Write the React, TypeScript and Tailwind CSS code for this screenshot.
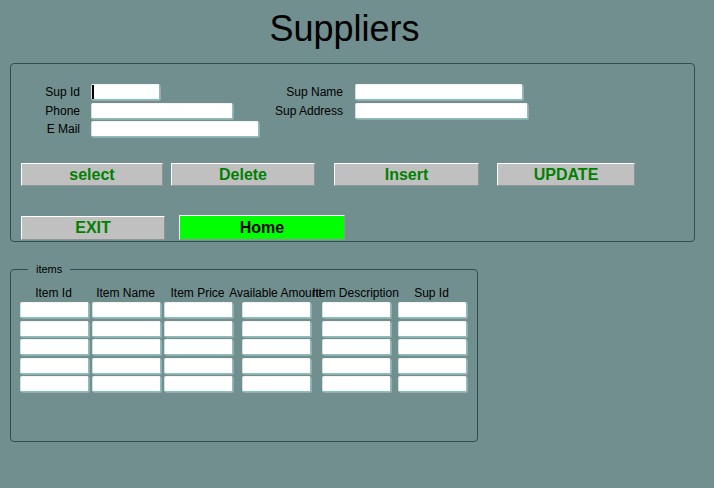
import React from "react";

function Field({ w, caret }: { w: string; caret?: boolean }) {
  return (
    <div
      className={`${w} h-[16px] bg-white border-b border-r border-[#7cc5c5] border-l border-l-[#d8dede] border-t border-t-[#f4f4f4] shadow-[1px_1px_0_#9ea8a8] rounded-[2px] flex items-center`}
    >
      {caret ? <div className="w-[2px] h-[14px] bg-black" /> : null}
    </div>
  );
}

function Btn({ w, h, label, ml, home }: { w: string; h: string; label: string; ml: string; home?: boolean }) {
  return (
    <div
      className={`${w} ${h} ${ml} flex items-center justify-center border border-t-white border-l-white border-b-[#8e9696] border-r-[#8e9696] rounded-[1px] font-bold text-[16px] leading-none ${
        home ? "bg-[#00ff00] text-black" : "bg-[#c0c0c0] text-[#008000]"
      }`}
    >
      {label}
    </div>
  );
}

const cols: { title: string; ml: string }[] = [
  { title: "Item Id", ml: "ml-0" },
  { title: "Item Name", ml: "ml-[2px]" },
  { title: "Item Price", ml: "ml-[2px]" },
  { title: "Available Amount", ml: "ml-[8px]" },
  { title: "Item Description", ml: "ml-[10px]" },
  { title: "Sup Id", ml: "ml-[6px]" },
];

export default function App() {
  return (
    <div
      className="w-[714px] h-[488px] bg-[#718f8e] text-black overflow-hidden"
      style={{ fontFamily: '"Liberation Sans", Arial, sans-serif' }}
    >
      <div className="h-[63px] pt-[11px]">
        <div className="w-[689px] text-center text-[36px] leading-[36px]">Suppliers</div>
      </div>

      <div className="ml-[10px] w-[685px] border border-[#2f4f4f] rounded-[4px] pt-[20px] pb-[1px]">
        <div className="flex text-[12px] leading-[16px]">
          <div className="w-[249px] flex flex-col gap-[2.5px]">
            <div className="flex h-[16px]">
              <div className="w-[69px] text-right">Sup Id</div>
              <div className="ml-[11px]">
                <Field w="w-[69px]" caret />
              </div>
            </div>
            <div className="flex h-[16px]">
              <div className="w-[69px] text-right">Phone</div>
              <div className="ml-[11px]">
                <Field w="w-[142px]" />
              </div>
            </div>
            <div className="flex h-[16px]">
              <div className="w-[69px] text-right">E Mail</div>
              <div className="ml-[11px]">
                <Field w="w-[168px]" />
              </div>
            </div>
          </div>
          <div className="flex flex-col gap-[2.5px]">
            <div className="flex h-[16px]">
              <div className="w-[83px] text-right">Sup Name</div>
              <div className="ml-[12px]">
                <Field w="w-[168px]" />
              </div>
            </div>
            <div className="flex h-[16px]">
              <div className="w-[83px] text-right">Sup Address</div>
              <div className="ml-[12px]">
                <Field w="w-[173px]" />
              </div>
            </div>
          </div>
        </div>

        <div className="flex mt-[26px]">
          <Btn w="w-[142px]" h="h-[23px]" ml="ml-[10px]" label="select" />
          <Btn w="w-[144px]" h="h-[23px]" ml="ml-[8px]" label="Delete" />
          <Btn w="w-[145px]" h="h-[23px]" ml="ml-[19px]" label="Insert" />
          <Btn w="w-[138px]" h="h-[23px]" ml="ml-[18px]" label="UPDATE" />
        </div>

        <div className="flex items-end mt-[29px] h-[25px]">
          <Btn w="w-[144px]" h="h-[24px]" ml="ml-[10px]" label="EXIT" />
          <Btn w="w-[166px]" h="h-[25px]" ml="ml-[14px]" label="Home" home />
        </div>
      </div>

      <div className="relative ml-[10px] mt-[27px] w-[468px] h-[173px] border border-[#2f4f4f] rounded-[4px] pt-[15px] pl-[9px]">
        <span className="absolute left-[17px] -top-[8px] px-[8px] bg-[#718f8e] text-[11px] leading-[14px]">
          items
        </span>
        <div className="flex">
          {cols.map((c) => (
            <div key={c.title} className={`${c.ml} w-[70px] flex flex-col`}>
              <div className="h-[16px] flex justify-center whitespace-nowrap text-[12px] leading-[16px] pr-[3px]">
                <span>{c.title}</span>
              </div>
              <div className="mt-[1px] flex flex-col gap-[2.5px]">
                {[0, 1, 2, 3, 4].map((r) => (
                  <Field key={r} w="w-[69px]" />
                ))}
              </div>
            </div>
          ))}
        </div>
      </div>
    </div>
  );
}
